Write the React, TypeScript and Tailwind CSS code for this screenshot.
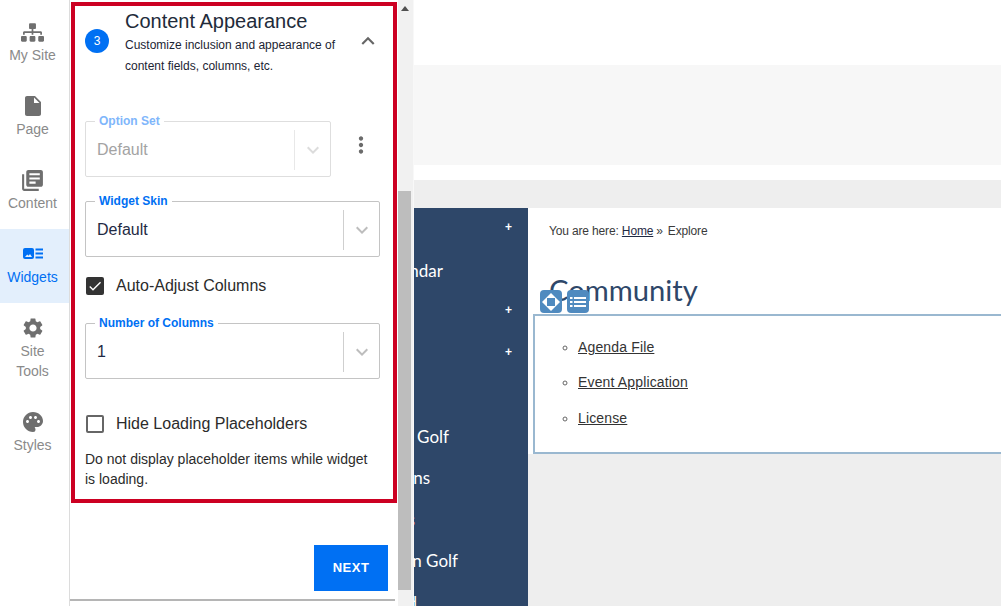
import React from "react";
import {
  MdInsertDriveFile,
  MdLibraryBooks,
  MdSettings,
  MdPalette,
  MdMoreVert,
  MdExpandLess,
  MdExpandMore,
  MdCheck,
} from "react-icons/md";
import { FaSitemap } from "react-icons/fa";

const SANS = "font-['Liberation_Sans',Arial,sans-serif]";

function WidgetsIcon() {
  return (
    <svg width="20" height="12" viewBox="0 0 20 12" fill="#0070f3">
      <rect x="0" y="0" width="11" height="11" rx="2" />
      <path d="M2 9 L4.2 6.5 L5.6 7.8 L7 6 L9 9 Z" fill="#e3effc" />
      <rect x="12.5" y="0.5" width="7.5" height="2" />
      <rect x="12.5" y="4.5" width="7.5" height="2" />
      <rect x="12.5" y="8.5" width="7.5" height="2" />
    </svg>
  );
}

interface NavItemProps {
  icon: React.ReactNode;
  label: React.ReactNode;
  active?: boolean;
  height: string;
}

function NavItem({ icon, label, active, height }: NavItemProps) {
  return (
    <div
      className={`flex flex-col items-center pt-[15px] pr-[4px] ${height} ${
        active ? "bg-[#e3effc] text-[#0070f3]" : "text-[#8a8a8a]"
      }`}
    >
      <div className="h-[20px] flex items-center justify-center text-[#6f6f6f]">
        {icon}
      </div>
      <div className="mt-[3px] text-[14px] leading-[20px] text-center">{label}</div>
    </div>
  );
}

interface SelectFieldProps {
  legend: string;
  value: string;
  disabled?: boolean;
  width: string;
}

function SelectField({ legend, value, disabled, width }: SelectFieldProps) {
  return (
    <fieldset
      className={`${width} h-[63px] border rounded-[2px] ${
        disabled ? "border-[#dedede]" : "border-[#c4c4c4]"
      }`}
    >
      <legend
        className={`ml-[9px] px-[4px] text-[12px] leading-[14px] font-bold ${
          disabled ? "text-[#80b6fb]" : "text-[#0070f3]"
        }`}
      >
        {legend}
      </legend>
      <div className="flex items-center h-[40px] mt-[2px] pl-[11px]">
        <div
          className={`flex-1 text-[16px] ${
            disabled ? "text-[#a3a3a3]" : "text-[#1f2a44]"
          }`}
        >
          {value}
        </div>
        <div
          className={`w-[1px] h-[40px] ${disabled ? "bg-[#e8e8e8]" : "bg-[#cfcfcf]"}`}
        />
        <div
          className={`w-[35px] flex justify-center ${
            disabled ? "text-[#dcdcdc]" : "text-[#bdbdbd]"
          }`}
        >
          <MdExpandMore size={24} />
        </div>
      </div>
    </fieldset>
  );
}

const navRows = [
  { text: "", plus: true },
  { text: "Calendar", pr: "pr-[85px]" },
  { text: "", plus: true },
  { text: "", plus: true },
  { text: "" },
  { text: "Junior  Golf", pr: "pr-[79px]" },
  { text: "Champions", pr: "pr-[98px]" },
  { text: "Results", pr: "pr-[113px]", orange: true },
  { text: "Women Golf", pr: "pr-[70px]" },
  { text: "Board", pr: "pr-[111px]" },
];

export default function App() {
  return (
    <div className={`w-[1001px] h-[606px] flex overflow-hidden bg-white ${SANS}`}>
      {/* Left nav */}
      <div className="w-[70px] shrink-0 border-r border-[#dcdcdc] pt-[7px]">
        <NavItem height="h-[74px]" icon={<FaSitemap size={23} />} label="My Site" />
        <NavItem height="h-[74px]" icon={<MdInsertDriveFile size={24} />} label="Page" />
        <NavItem height="h-[74px]" icon={<MdLibraryBooks size={25} />} label="Content" />
        <NavItem height="h-[74px]" active icon={<WidgetsIcon />} label="Widgets" />
        <NavItem
          height="h-[94px]"
          icon={<MdSettings size={24} />}
          label={
            <>
              Site
              <br />
              Tools
            </>
          }
        />
        <NavItem height="h-[74px]" icon={<MdPalette size={24} />} label="Styles" />
      </div>

      {/* Settings panel */}
      <div className="w-[328px] shrink-0 flex flex-col">
        <div className="ml-[1px] mt-[2px] w-[326px] h-[501px] border-[4px] border-[#cc0022] px-[10px] overflow-hidden">
          <div className="flex items-start">
            <div className="mt-[23px] w-[24px] h-[24px] rounded-full bg-[#0070f3] text-white text-[12px] flex items-center justify-center shrink-0">
              3
            </div>
            <div className="ml-[16px] w-[225px]">
              <div className="text-[20px] leading-[30px] text-[#222b3a]">Content Appearance</div>
              <div className="text-[12px] leading-[21px] mt-[-1px] text-[#1c2433]">
                Customize inclusion and appearance of content fields, columns, etc.
              </div>
            </div>
            <div className="mt-[22px] ml-[5px] text-[#666]">
              <MdExpandLess size={26} />
            </div>
          </div>

          <div className="flex items-start mt-[37px]">
            <SelectField legend="Option Set" value="Default" disabled width="w-[246px]" />
            <div className="ml-[17px] mt-[18px] text-[#6b6b6b]">
              <MdMoreVert size={26} />
            </div>
          </div>

          <div className="mt-[17px]">
            <SelectField legend="Widget Skin" value="Default" width="w-[295px]" />
          </div>

          <div className="flex items-center mt-[17px] h-[24px]">
            <div className="ml-[1px] w-[18px] h-[18px] rounded-[2px] bg-[#333] text-white flex items-center justify-center">
              <MdCheck size={16} />
            </div>
            <div className="ml-[12px] text-[16px] text-[#2b2b2b]">Auto-Adjust Columns</div>
          </div>

          <div className="mt-[18px]">
            <SelectField legend="Number of Columns" value="1" width="w-[295px]" />
          </div>

          <div className="flex items-center mt-[33px] h-[24px]">
            <div className="ml-[1px] w-[18px] h-[18px] rounded-[2px] border-2 border-[#666]" />
            <div className="ml-[12px] text-[16px] text-[#2b2b2b]">Hide Loading Placeholders</div>
          </div>

          <div className="mt-[13px] w-[295px] text-[14px] leading-[20px] text-[#2b2b2b]">
            Do not display placeholder items while widget is loading.
          </div>
        </div>

        <div className="flex-1 flex flex-col">
          <div className="flex justify-end pr-[10px] pt-[42px]">
            <button className="w-[74px] h-[46px] bg-[#0070f3] text-white text-[13px] font-bold tracking-[0.5px]">
              NEXT
            </button>
          </div>
          <div className="mt-[8px] mr-[3px] h-[2px] bg-[#b5b5b5]" />
        </div>
      </div>

      {/* Panel scrollbar */}
      <div className="w-[16px] shrink-0 bg-[#f1f1f1] flex flex-col border-r border-[#f8f8f8]">
        <div className="h-[191px] flex justify-center pt-[6px]">
          <div className="w-0 h-0 border-x-[4px] border-x-transparent border-b-[5px] border-b-[#505050] mr-[2px]" />
        </div>
        <div className="w-[13px] h-[399px] bg-[#bdbdbd]" />
      </div>

      {/* Page preview */}
      <div className="flex-1 flex flex-col min-w-0">
        <div className="h-[65px] shrink-0 bg-white" />
        <div className="h-[100px] shrink-0 bg-[#f7f7f7]" />
        <div className="h-[15px] shrink-0 bg-white" />
        <div className="h-[28px] shrink-0 bg-[#eeeeee]" />
        <div className="flex-1 flex min-h-0">
          <div className="w-[114px] shrink-0 bg-[#2e4769] overflow-hidden">
            {navRows.map((row, i) => (
              <div key={i} className="relative h-[41.5px] flex items-center justify-end overflow-hidden">
                {row.plus && (
                  <span className="absolute left-[91px] top-[11px] text-[12px] leading-[16px] font-bold text-[#fff]">+</span>
                )}
                {row.text && (
                  <span
                    className={`whitespace-pre font-['Lato',sans-serif] text-[17px] ${row.pr} ${
                      row.orange ? "text-[#e8a25a]" : "text-white"
                    }`}
                  >
                    {row.text}
                  </span>
                )}
              </div>
            ))}
          </div>

          <div className="flex-1 min-w-0 bg-[#eeeeee]">
            <div className="h-[246px] bg-white pl-[5px] flex flex-col">
              <div className="pl-[16px] pt-[15px] text-[12px] leading-[16px] tracking-[-0.15px] text-[#3a3a3a] whitespace-nowrap">
                You are here: <span className="underline text-[#1f2a44]">Home</span>
                <span className="ml-[3px]">»</span>
                <span className="ml-[5px]">Explore</span>
              </div>
              <div className="pl-[16px] mt-[33px] h-[42px] text-[29.2px] leading-[36px] font-['Lato',sans-serif] text-[#2e4769] whitespace-nowrap">
                Community
              </div>
              <div className="relative h-[140px] border-2 border-r-0 border-[#9ab8d0]">
                <div className="absolute left-[5px] top-[-26px] flex gap-[5px]">
                  <div className="w-[22px] h-[23px] rounded-[4px] bg-[#4f8abf] flex items-center justify-center">
                    <svg width="18" height="18" viewBox="0 0 18 18">
                      <path d="M9 0 L18 9 L9 18 L0 9 Z" fill="#fff" />
                      <rect x="5" y="5" width="8" height="8" fill="#4f8abf" />
                    </svg>
                  </div>
                  <div className="w-[22px] h-[23px] rounded-[4px] bg-[#4f8abf] flex items-center justify-center">
                    <svg width="16" height="12" viewBox="0 0 16 12" fill="#fff">
                      <rect x="0" y="1" width="2.5" height="2" />
                      <rect x="4" y="1" width="12" height="2" />
                      <rect x="0" y="5" width="2.5" height="2" />
                      <rect x="4" y="5" width="12" height="2" />
                      <rect x="0" y="9" width="2.5" height="2" />
                      <rect x="4" y="9" width="12" height="2" />
                    </svg>
                  </div>
                </div>
                <ul className="pl-[43px] pt-[20px] text-[14px] tracking-[0.15px] text-[#333] list-[circle] leading-[22px] marker:text-[#666]">
                  <li className="mb-[13px]">
                    <span className="underline">Agenda File</span>
                  </li>
                  <li className="mb-[14px]">
                    <span className="underline">Event Application</span>
                  </li>
                  <li>
                    <span className="underline">License</span>
                  </li>
                </ul>
              </div>
            </div>
          </div>
        </div>
      </div>
    </div>
  );
}
